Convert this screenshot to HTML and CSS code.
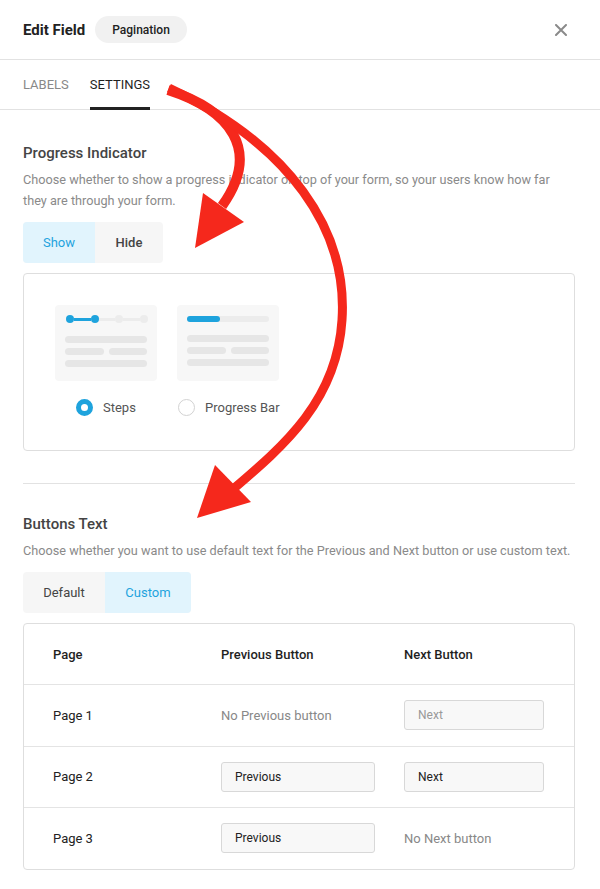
FILE: index.html
```html
<!DOCTYPE html>
<html>
<head>
<meta charset="utf-8">
<link rel="stylesheet" href="styles.css">
</head>
<body>
<div class="panel">
  <header class="head">
    <span class="head-title">Edit Field</span>
    <span class="pill">Pagination</span>
    <span class="close" aria-label="Close">
      <svg width="12" height="12" viewBox="0 0 12 12"><path d="M1 1L11 11M11 1L1 11" stroke="#8a8a8a" stroke-width="2" stroke-linecap="round"/></svg>
    </span>
  </header>
  <nav class="tabs">
    <span class="tab">LABELS</span>
    <span class="tab active">SETTINGS</span>
  </nav>
  <main class="content">
    <section class="section">
      <h2 class="sec-title">Progress Indicator</h2>
      <p class="sec-desc">Choose whether to show a progress indicator on top of your form, so your users know how far they are through your form.</p>
      <div class="toggle">
        <span class="tg on">Show</span>
        <span class="tg">Hide</span>
      </div>
      <div class="choice-box">
        <div class="choice">
          <div class="card">
            <div class="steps">
              <span class="dot blue"></span><span class="ln blue"></span><span class="dot blue"></span><span class="ln"></span><span class="dot"></span><span class="ln"></span><span class="dot"></span>
            </div>
            <div class="bars">
              <span class="bar full"></span>
              <div class="bar-row"><span class="bar"></span><span class="bar"></span></div>
              <span class="bar full"></span>
            </div>
          </div>
          <label class="radio-row"><span class="radio sel"></span>Steps</label>
        </div>
        <div class="choice">
          <div class="card">
            <div class="pbar"><span class="pfill"></span></div>
            <div class="bars">
              <span class="bar full"></span>
              <div class="bar-row"><span class="bar"></span><span class="bar"></span></div>
              <span class="bar full"></span>
            </div>
          </div>
          <label class="radio-row"><span class="radio"></span>Progress Bar</label>
        </div>
      </div>
    </section>
    <hr class="divider">
    <section class="section">
      <h2 class="sec-title">Buttons Text</h2>
      <p class="sec-desc one">Choose whether you want to use default text for the Previous and Next button or use custom text.</p>
      <div class="toggle">
        <span class="tg def">Default</span>
        <span class="tg on cust">Custom</span>
      </div>
      <div class="table">
        <div class="row th">
          <span class="c1">Page</span><span class="c2">Previous Button</span><span class="c3">Next Button</span>
        </div>
        <div class="row">
          <span class="c1">Page 1</span><span class="c2 muted">No Previous button</span><span class="c3"><span class="input ph w2">Next</span></span>
        </div>
        <div class="row">
          <span class="c1">Page 2</span><span class="c2"><span class="input w1">Previous</span></span><span class="c3"><span class="input w2">Next</span></span>
        </div>
        <div class="row">
          <span class="c1">Page 3</span><span class="c2"><span class="input w1">Previous</span></span><span class="c3 muted">No Next button</span>
        </div>
      </div>
    </section>
  </main>
  <svg class="arrows" width="600" height="889" viewBox="0 0 600 889">
    <g fill="none" stroke="#f5281c">
      <path stroke-width="10" d="M168,90 C230,110 262,150 222,206"/>
      <path stroke-width="9" d="M169,88 C290,145 348,230 342,320 C337,400 285,445 232,490"/>
    </g>
    <g fill="#f5281c">
      <polygon points="203,193 244,222 195,248"/>
      <polygon points="215,465 251,502 197,518"/>
    </g>
  </svg>
</div>
</body>
</html>
```
FILE: styles.css
```css
* { box-sizing: border-box; }
html, body { margin: 0; padding: 0; background: #fff; }
body {
  font-family: Roboto, "Liberation Sans", Arial, sans-serif;
  color: #333;
  width: 600px;
  height: 889px;
  overflow: hidden;
}
.panel { position: relative; width: 600px; height: 889px; }
.head {
  height: 60px;
  display: flex;
  align-items: center;
  padding: 0 23px;
  border-bottom: 1px solid #e2e2e2;
}
.head-title { font-size: 15px; font-weight: 700; color: #222; }
.pill {
  margin-left: 10px;
  height: 27px;
  padding: 0 17px;
  border-radius: 14px;
  background: #f1f1f1;
  font-size: 12px;
  font-weight: 500;
  color: #222;
  display: flex;
  align-items: center;
}
.close { margin-left: auto; margin-right: 10px; display: flex; }
.tabs {
  height: 50px;
  display: flex;
  gap: 21px;
  padding: 0 23px;
  border-bottom: 1px solid #e2e2e2;
}
.tab {
  font-size: 13px;
  color: #888;
  display: flex;
  align-items: center;
  padding-top: 2px;
  border-bottom: 3px solid transparent;
  margin-bottom: -1px;
}
.tab.active { color: #1f1f1f; border-bottom-color: #222; }
.content { padding: 0 25px 0 23px; }
.sec-title {
  margin: 34px 0 0;
  font-size: 15px;
  font-weight: 500;
  color: #444;
  line-height: 18px;
}
.sec-desc {
  margin: 7px 0 0;
  font-size: 12.7px;
  line-height: 21px;
  color: #8a8a8a;
  padding-right: 20px;
}
.sec-desc.one { padding-right: 0; white-space: nowrap; }
.toggle {
  margin-top: 11px;
  display: inline-flex;
  border-radius: 4px;
  overflow: hidden;
  height: 41px;
  background: #f6f6f6;
}
.tg {
  display: flex;
  align-items: center;
  justify-content: center;
  font-size: 13px;
  color: #444;
  font-weight: 500;
  width: 68px;
}
.tg.on { background: #e1f4fd; color: #1ea3dd; width: 72px; font-weight: 400; }
.tg.def { width: 82px; font-weight: 400; }
.tg.cust { width: 86px; }
.choice-box {
  margin-top: 10px;
  border: 1px solid #dedede;
  border-radius: 4px;
  height: 178px;
  padding: 31px 31px 0;
  display: flex;
  gap: 20px;
}
.choice { width: 102px; display: flex; flex-direction: column; }
.card {
  width: 102px;
  height: 76px;
  background: #f7f7f7;
  border-radius: 4px;
  padding: 10px 10px 0;
}
.steps { display: flex; align-items: center; height: 8px; margin: 0 0 0 1px; width: 82px; }
.dot { width: 8px; height: 8px; border-radius: 50%; background: #ececec; flex: none; }
.dot.blue { background: #1ea3dd; }
.ln { flex: 1; height: 3px; background: #ececec; }
.ln.blue { background: #1ea3dd; }
.pbar { height: 6px; border-radius: 3px; background: #ececec; width: 82px; margin-top: 1px; }
.pfill { display: block; width: 33px; height: 6px; border-radius: 3px; background: #1ea3dd; }
.bars { margin-top: 13px; display: flex; flex-direction: column; gap: 5px; width: 82px; }
.bar { display: block; height: 7px; border-radius: 4px; background: #e6e6e6; flex: 1; }
.bar.full { flex: none; width: 82px; }
.bar-row { display: flex; gap: 5px; }
.radio-row {
  margin-top: 18px;
  margin-left: 21px;
  display: flex;
  align-items: center;
  font-size: 13px;
  color: #555;
  white-space: nowrap;
}
.choice:nth-child(2) .radio-row { margin-left: 1px; }
.radio {
  width: 17px; height: 17px;
  border-radius: 50%;
  border: 1px solid #d2d2d2;
  margin-right: 10px;
  flex: none;
}
.radio.sel { border: 5px solid #1ea3dd; background: #fff; }
.divider { border: 0; border-top: 1px solid #e2e2e2; margin: 32px 0 0; }
.section + .divider + .section .sec-title { margin-top: 31px; }
.table {
  margin-top: 10px;
  border: 1px solid #dedede;
  border-radius: 4px;
}
.row {
  display: flex;
  align-items: center;
  height: 61.5px;
  border-top: 1px solid #e4e4e4;
  font-size: 13px;
  color: #222;
}
.row:first-child { border-top: 0; height: 60px; }
.th span { font-weight: 500; color: #1f1f1f; }
.c1 { width: 197px; padding-left: 29px; }
.c2 { width: 183px; }
.c3 { flex: 1; }
.muted { color: #888; }
.input {
  display: flex;
  align-items: center;
  height: 30px;
  padding: 0 13px;
  background: #f8f8f8;
  border: 1px solid #d8d8d8;
  border-radius: 3px;
  font-size: 12px;
  color: #222;
}
.input.w1 { width: 154px; }
.input.w2 { width: 140px; }
.input.ph { color: #999; }
.arrows { position: absolute; left: 0; top: 0; pointer-events: none; }
```
